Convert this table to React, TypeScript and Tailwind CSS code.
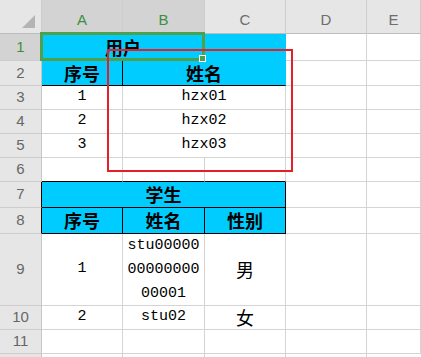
import React from "react";

const sans = "font-['Liberation_Sans',Arial,sans-serif]";
const mono = "font-['Liberation_Mono',monospace] text-[15px]";
const cjk = "font-['Noto_Sans_CJK_SC',sans-serif] text-[18px]";

const G = "border-r-[#d4d4d4] border-b-[#d4d4d4]";
const CY = "bg-[#00ccff]";

function Cell({
  w,
  className = "",
  children,
}: {
  w: string;
  className?: string;
  children?: React.ReactNode;
}) {
  return (
    <div
      className={`${w} shrink-0 h-full flex items-center justify-center border-r border-b text-black ${className}`}
    >
      {children}
    </div>
  );
}

function RowHead({
  n,
  selected = false,
  edge = "border-r-[#c6c6c6]",
}: {
  n: number;
  selected?: boolean;
  edge?: string;
}) {
  return (
    <div
      className={`w-[42px] shrink-0 h-full flex items-center justify-center border-r border-b border-b-[#cdcdcd] ${edge} ${sans} text-[15px] ${
        selected ? "bg-[#d3d3d3] text-[#3d8f3d]" : "bg-[#e6e6e6] text-[#666666]"
      }`}
    >
      {n}
    </div>
  );
}

function ColHead({
  label,
  w,
  selected = false,
}: {
  label: string;
  w: string;
  selected?: boolean;
}) {
  return (
    <div
      className={`${w} shrink-0 h-full flex items-center justify-center pt-[7px] border-r border-b border-r-[#cdcdcd] border-b-[#bdbdbd] ${sans} text-[15px] ${
        selected ? "bg-[#d3d3d3] text-[#3d8f3d]" : "bg-[#e6e6e6] text-[#6d6d6d]"
      }`}
    >
      {label}
    </div>
  );
}

function Row({ h, children }: { h: string; children: React.ReactNode }) {
  return <div className={`flex ${h}`}>{children}</div>;
}

const Empty = () => (
  <>
    <Cell w="w-[81px]" className={G} />
    <Cell w="flex-1" className={G} />
  </>
);

export default function App() {
  return (
    <div className="relative w-[421px] h-[357px] overflow-hidden bg-white">
      <div className="flex flex-col h-full">
        {/* column headers */}
        <Row h="h-[34px]">
          <div className="w-[42px] shrink-0 h-full relative bg-[#e6e6e6] border-r border-b border-r-[#cdcdcd] border-b-[#bdbdbd]">
            <svg className="absolute left-[22px] top-[15px]" width="13" height="13" viewBox="0 0 13 13">
              <polygon points="13,0 13,13 0,13" fill="#b4b4b4" />
            </svg>
          </div>
          <ColHead label="A" w="w-[81px]" selected />
          <ColHead label="B" w="w-[82px]" selected />
          <ColHead label="C" w="w-[81px]" />
          <ColHead label="D" w="w-[81px]" />
          <ColHead label="E" w="flex-1" />
        </Row>

        <Row h="h-[27px]">
          <RowHead n={1} selected />
          <Cell w="w-[163px]" className={`${CY} border-r-[#00ccff] border-b-[#00ccff] ${cjk} font-bold`}>
            用户
          </Cell>
          <Cell w="w-[81px]" className={`${CY} border-r-[#00ccff] border-b-[#00ccff]`} />
          <Empty />
        </Row>

        <Row h="h-[25px]">
          <RowHead n={2} />
          <Cell w="w-[81px]" className={`${CY} border-r-black border-b-black ${cjk} font-bold`}>
            序号
          </Cell>
          <Cell w="w-[163px]" className={`${CY} border-r-[#00ccff] border-b-black ${cjk} font-bold`}>
            姓名
          </Cell>
          <Empty />
        </Row>

        {["hzx01", "hzx02", "hzx03"].map((name, i) => (
          <Row h="h-[24px]" key={name}>
            <RowHead n={i + 3} />
            <Cell w="w-[81px]" className={`${G} ${mono}`}>
              {i + 1}
            </Cell>
            <Cell w="w-[163px]" className={`${G} ${mono}`}>
              {name}
            </Cell>
            <Empty />
          </Row>
        ))}

        <Row h="h-[24px]">
          <RowHead n={6} />
          <Cell w="w-[81px]" className="border-r-[#d4d4d4] border-b-black" />
          <Cell w="w-[82px]" className="border-r-[#d4d4d4] border-b-black" />
          <Cell w="w-[81px]" className="border-r-[#d4d4d4] border-b-black" />
          <Empty />
        </Row>

        <Row h="h-[26px]">
          <RowHead n={7} edge="border-r-black" />
          <Cell w="w-[244px]" className={`${CY} border-r-black border-b-black ${cjk} font-bold`}>
            学生
          </Cell>
          <Empty />
        </Row>

        <Row h="h-[26px]">
          <RowHead n={8} edge="border-r-black" />
          <Cell w="w-[81px]" className={`${CY} border-r-black border-b-black ${cjk} font-bold`}>
            序号
          </Cell>
          <Cell w="w-[82px]" className={`${CY} border-r-black border-b-black ${cjk} font-bold`}>
            姓名
          </Cell>
          <Cell w="w-[81px]" className={`${CY} border-r-black border-b-black ${cjk} font-bold`}>
            性别
          </Cell>
          <Empty />
        </Row>

        <Row h="h-[72px]">
          <RowHead n={9} />
          <Cell w="w-[81px]" className={`${G} ${mono}`}>
            1
          </Cell>
          <Cell w="w-[82px]" className={`${G} ${mono} flex-col leading-[24px]`}>
            <span>stu00000</span>
            <span>00000000</span>
            <span>00001</span>
          </Cell>
          <Cell w="w-[81px]" className={`${G} ${cjk}`}>
            男
          </Cell>
          <Empty />
        </Row>

        <Row h="h-[24px]">
          <RowHead n={10} />
          <Cell w="w-[81px]" className={`${G} ${mono}`}>
            2
          </Cell>
          <Cell w="w-[82px]" className={`${G} ${mono}`}>
            stu02
          </Cell>
          <Cell w="w-[81px]" className={`${G} ${cjk}`}>
            女
          </Cell>
          <Empty />
        </Row>

        <Row h="h-[24px]">
          <RowHead n={11} />
          <Cell w="w-[81px]" className={G} />
          <Cell w="w-[82px]" className={G} />
          <Cell w="w-[81px]" className={G} />
          <Empty />
        </Row>

        <div className="flex flex-1">
          <div className="w-[42px] shrink-0 bg-[#e6e6e6] border-r border-r-[#c6c6c6]" />
          <div className="w-[81px] shrink-0 border-r border-r-[#d4d4d4]" />
          <div className="w-[82px] shrink-0 border-r border-r-[#d4d4d4]" />
          <div className="w-[81px] shrink-0 border-r border-r-[#d4d4d4]" />
          <div className="w-[81px] shrink-0 border-r border-r-[#d4d4d4]" />
        </div>
      </div>

      {/* selection on A1:B1 */}
      <div className="absolute left-[40px] top-[32px] w-[165px] h-[29px] border-[3px] border-[#4ea14a]" />
      <div className="absolute left-[199px] top-[55px] w-[7px] h-[7px] bg-[#4ea14a] border border-white" />

      {/* red annotation box */}
      <div className="absolute left-[107px] top-[49px] w-[186px] h-[123px] border-2 border-[#e3202a]" />
    </div>
  );
}
